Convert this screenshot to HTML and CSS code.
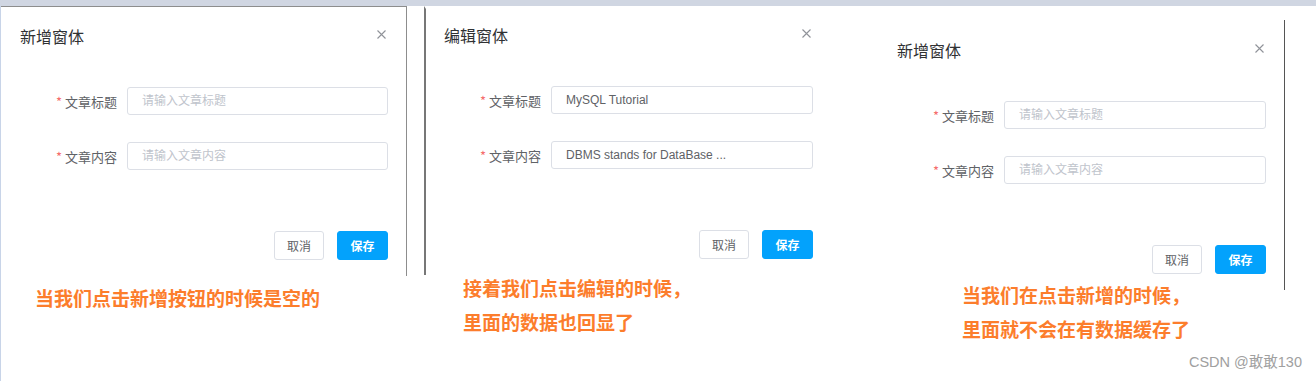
FILE: index.html
```html
<!DOCTYPE html>
<html lang="zh-CN">

<head>
    <meta charset="UTF-8">
    <meta name="viewport" content="width=device-width, initial-scale=1.0">
    <title>新增 / 编辑窗体</title>
    <link rel="stylesheet" href="styles.css">
</head>

<body>

    <div class="topbar"></div>

    <div class="board">
        <!-- 第一次点击新增 -->
        <div class="shot shot-add">
            <div class="dialog dialog-add">
                <div class="dialog-header">
                    <span class="dialog-title">新增窗体</span>
                    <svg class="dialog-close" width="9" height="9" viewBox="0 0 9 9">
                        <path d="M0.5 0.5 L8.5 8.5 M8.5 0.5 L0.5 8.5" />
                    </svg>
                </div>
                <div class="dialog-body">
                    <div class="form-row">
                        <label class="form-label"><span class="required">*</span>文章标题</label>
                        <input class="form-input" type="text" placeholder="请输入文章标题">
                    </div>
                    <div class="form-row">
                        <label class="form-label"><span class="required">*</span>文章内容</label>
                        <input class="form-input" type="text" placeholder="请输入文章内容">
                    </div>
                </div>
                <div class="dialog-footer">
                    <button class="btn btn-cancel">取消</button>
                    <button class="btn btn-save">保存</button>
                </div>
            </div>
            <p class="caption">当我们点击新增按钮的时候是空的</p>
        </div>

        <!-- 点击编辑 -->
        <div class="shot shot-edit">
            <div class="dialog dialog-edit">
                <div class="dialog-header">
                    <span class="dialog-title">编辑窗体</span>
                    <svg class="dialog-close" width="9" height="9" viewBox="0 0 9 9">
                        <path d="M0.5 0.5 L8.5 8.5 M8.5 0.5 L0.5 8.5" />
                    </svg>
                </div>
                <div class="dialog-body">
                    <div class="form-row">
                        <label class="form-label"><span class="required">*</span>文章标题</label>
                        <input class="form-input" type="text" value="MySQL Tutorial">
                    </div>
                    <div class="form-row">
                        <label class="form-label"><span class="required">*</span>文章内容</label>
                        <input class="form-input" type="text" value="DBMS stands for DataBase ...">
                    </div>
                </div>
                <div class="dialog-footer">
                    <button class="btn btn-cancel">取消</button>
                    <button class="btn btn-save">保存</button>
                </div>
            </div>
            <p class="caption">接着我们点击编辑的时候，<br>里面的数据也回显了</p>
        </div>

        <!-- 再次点击新增 -->
        <div class="shot shot-again">
            <div class="dialog dialog-again">
                <div class="dialog-header">
                    <span class="dialog-title">新增窗体</span>
                    <svg class="dialog-close" width="9" height="9" viewBox="0 0 9 9">
                        <path d="M0.5 0.5 L8.5 8.5 M8.5 0.5 L0.5 8.5" />
                    </svg>
                </div>
                <div class="dialog-body">
                    <div class="form-row">
                        <label class="form-label"><span class="required">*</span>文章标题</label>
                        <input class="form-input" type="text" placeholder="请输入文章标题">
                    </div>
                    <div class="form-row">
                        <label class="form-label"><span class="required">*</span>文章内容</label>
                        <input class="form-input" type="text" placeholder="请输入文章内容">
                    </div>
                </div>
                <div class="dialog-footer">
                    <button class="btn btn-cancel">取消</button>
                    <button class="btn btn-save">保存</button>
                </div>
            </div>
            <p class="caption">当我们在点击新增的时候，<br>里面就不会在有数据缓存了</p>
        </div>
    </div>

    <div class="watermark">CSDN @敢敢130</div>

</body>

</html>
```

FILE: styles.css
```css
body {
    margin: 0;
    padding: 0;
    min-height: 100vh;
    background-color: #fff;
    box-shadow: inset 1px 0 #c8d4e8;
    font-family: "Liberation Sans", "Noto Sans CJK SC", sans-serif;
    color: #606266;
    overflow: hidden;
}

.topbar {
    height: 6px;
    background-color: #d0d6e2;
}

.board {
    display: flex;
    align-items: flex-start;
}

.shot {
    display: flex;
    flex-direction: column;
}

.shot-edit {
    margin-left: 17px;
}

.shot-again {
    margin-top: 14px;
    margin-left: 45px;
}

/* dialog */
.dialog {
    width: 408px;
    height: 270px;
    box-sizing: border-box;
    padding: 20px 19px 16px 20px;
    display: flex;
    flex-direction: column;
    background-color: #fff;
}

.dialog-add {
    width: 407px;
    box-shadow: inset 1px 0 #c8d4e8, inset 0 1px #8d8d8d, inset -1px 0 #8d8d8d;
}

/* the edit shot was cropped a pixel higher */
.dialog-edit {
    height: 269px;
    padding-top: 16px;
    padding-left: 18px;
    border-left: 2px solid #777;
    border-top: 3px solid #fff;
}

.dialog-again {
    box-shadow: inset -1px 0 #555;
}

.dialog-header {
    display: flex;
    justify-content: space-between;
    align-items: flex-start;
    height: 20px;
}

.dialog-title {
    font-family: "Noto Sans CJK SC", sans-serif;
    font-size: 16px;
    line-height: 20px;
    color: #303133;
}

.dialog-close {
    margin-top: 4px;
    margin-right: 2px;
    fill: none;
    stroke: #909399;
    stroke-width: 1.1;
}

.dialog-body {
    padding-top: 41px;
}

.form-row {
    display: flex;
    align-items: center;
    height: 28px;
    margin-bottom: 27px;
}

.form-label {
    width: 97px;
    padding-right: 10px;
    text-align: right;
    font-family: "Noto Sans CJK SC", sans-serif;
    font-size: 13px;
    color: #606266;
}

.required {
    color: #f56c6c;
    margin-right: 3px;
}

.form-input {
    flex: 1;
    min-width: 0;
    height: 28px;
    box-sizing: border-box;
    margin: 0;
    padding: 0 14px;
    border: 1px solid #dcdfe6;
    border-radius: 3px;
    outline: none;
    font-family: "Liberation Sans", "Noto Sans CJK SC", sans-serif;
    font-size: 12px;
    color: #606266;
}

.form-input::placeholder {
    color: #c0c4cc;
    font-family: "Noto Sans CJK SC", sans-serif;
}

.dialog-footer {
    margin-top: auto;
    display: flex;
    justify-content: flex-end;
    gap: 13px;
}

.btn {
    height: 29px;
    margin: 0;
    padding: 0;
    border-radius: 3px;
    font-family: "Noto Sans CJK SC", sans-serif;
    font-size: 12px;
    cursor: pointer;
}

.btn-cancel {
    width: 50px;
    background-color: #fff;
    border: 1px solid #dcdfe6;
    color: #606266;
}

.btn-save {
    width: 51px;
    background-color: #03a2fc;
    border: 1px solid #03a2fc;
    color: #fff;
    font-weight: 600;
}

/* annotations */
.caption {
    margin: 0;
    font-family: "Noto Sans CJK SC", sans-serif;
    font-size: 19px;
    font-weight: 700;
    line-height: 34px;
    color: #fc7d2c;
    white-space: nowrap;
}

.shot-add .caption {
    margin-top: 5px;
    margin-left: 35px;
}

.shot-edit .caption {
    margin-top: -4px;
    margin-left: 39px;
}

.shot-again .caption {
    margin-top: -12px;
    margin-left: 85px;
}

.watermark {
    margin-top: 8px;
    padding-right: 14px;
    text-align: right;
    font-family: "Liberation Sans", "Noto Sans CJK SC", sans-serif;
    font-size: 14.5px;
    line-height: 17px;
    color: #a0a0a0;
}
```
